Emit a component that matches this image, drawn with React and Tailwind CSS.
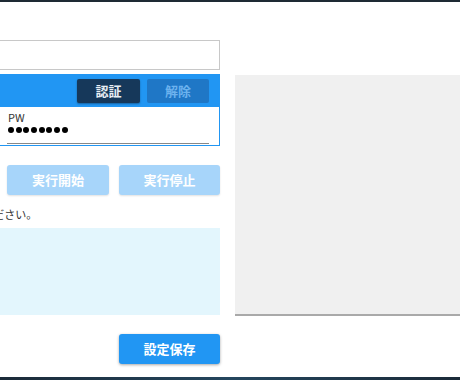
export default function App() {
    return (
        <div
            className="w-[460px] h-[380px] overflow-hidden bg-white flex flex-col"
            style={{ fontFamily: '"Noto Sans CJK JP", "Noto Sans", sans-serif' }}
        >
            {/* top bar */}
            <div className="h-[2px] bg-[#1e2a34] shrink-0" />

            <div className="flex-1 flex gap-[15px]">
                {/* left column (partly off screen) */}
                <div className="w-[433px] ml-[-213px] shrink-0 flex flex-col pt-[38px]">
                    <div className="h-[30px] border border-[#c8c8c8] bg-white" />

                    {/* auth panel */}
                    <div className="mt-[4px] border border-[#2196f3]">
                        <div className="h-[32px] bg-[#2196f3] flex items-center justify-end gap-[7px] pr-[10px]">
                            <button className="w-[63px] h-[24px] rounded-[2px] bg-[#16385a] text-[#e8eef4] text-[13px] font-bold shadow-[0_1px_2px_rgba(0,0,0,0.35)]">
                                認証
                            </button>
                            <button className="w-[62px] h-[24px] rounded-[2px] bg-[#1f77c6] text-[#6cb2ee] text-[13px] font-bold">
                                解除
                            </button>
                        </div>
                        <div className="h-[38px] grid grid-cols-[202px_202px] gap-[11px] pl-[6px]">
                            <div className="flex flex-col pt-[3px]">
                                <span className="text-[11px] leading-[14px] text-[#333] pl-[1px]">ID</span>
                                <div className="h-[12px]" />
                                <div className="mt-[7px] h-[1px] bg-[#888]" />
                            </div>
                            <div className="flex flex-col pt-[3px]">
                                <span className="text-[11px] leading-[14px] text-[#333] pl-[1px]">PW</span>
                                <div className="h-[12px] flex items-center gap-[1.7px] pl-[1px]">
                                    {[0, 1, 2, 3, 4, 5, 6, 7].map((i) => (
                                        <span key={i} className="w-[6px] h-[6px] rounded-full bg-black" />
                                    ))}
                                </div>
                                <div className="mt-[7px] h-[1px] bg-[#888]" />
                            </div>
                        </div>
                    </div>

                    {/* run buttons */}
                    <div className="mt-[19px] flex justify-end gap-[10px]">
                        <button className="w-[102px] h-[30px] rounded-[3px] bg-[#a7d5fa] text-white text-[13px] font-bold shadow-[0_1px_2px_rgba(0,0,0,0.12)]">
                            実行開始
                        </button>
                        <button className="w-[101px] h-[30px] rounded-[3px] bg-[#a7d5fa] text-white text-[13px] font-bold shadow-[0_1px_2px_rgba(0,0,0,0.12)]">
                            実行停止
                        </button>
                    </div>

                    <p className="mt-[11px] h-[16px] pl-[9px] text-[11px] leading-[16px] text-[#333] whitespace-nowrap">
                        ＩＤ認証後、実行開始ボタンを押してください。
                    </p>

                    {/* log area */}
                    <div className="mt-[6px] h-[87px] bg-[#e3f6fd]" />

                    <div className="mt-[19px] flex justify-end">
                        <button className="w-[101px] h-[30px] rounded-[3px] bg-[#2196f3] text-white text-[13px] font-bold shadow-[0_1px_3px_rgba(0,0,0,0.35)]">
                            設定保存
                        </button>
                    </div>
                </div>

                {/* right preview */}
                <div className="flex-1 pt-[73px] pb-[61px] flex flex-col">
                    <div className="flex-1 bg-[#f0f0f0] border-b-2 border-[#a9a9a9]" />
                </div>
            </div>

            {/* bottom bar */}
            <div className="h-[3px] bg-[linear-gradient(90deg,#1b2a38,#24465e,#1b2a38)] shrink-0" />
        </div>
    );
}
